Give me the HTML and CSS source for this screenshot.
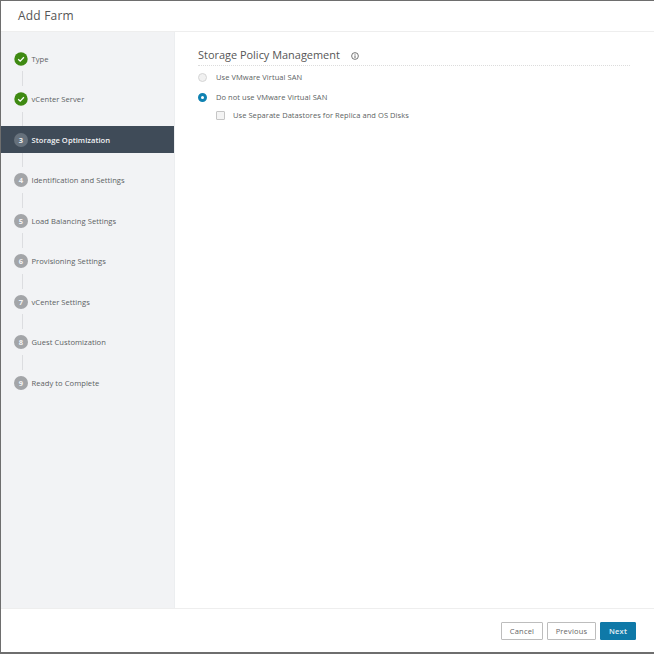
FILE: index.html
```html
<!DOCTYPE html>
<html lang="en">
<head>
<meta charset="utf-8">
<title>Add Farm</title>
<link rel="stylesheet" href="styles.css">
</head>
<body>
<div class="dialog">
  <header class="head"><h1 class="title">Add Farm</h1></header>
  <div class="main">
    <nav class="steps">
      <div class="step done"><span class="bullet"><svg viewBox="0 0 14 14" width="14" height="14"><circle cx="7" cy="7" r="6.7" fill="#3f8a12"/><path d="M4.2 7.2 6.2 9.1 9.9 5.2" fill="none" stroke="#fff" stroke-width="1.3"/></svg></span><span class="label">Type</span></div>
      <div class="step done"><span class="bullet"><svg viewBox="0 0 14 14" width="14" height="14"><circle cx="7" cy="7" r="6.7" fill="#3f8a12"/><path d="M4.2 7.2 6.2 9.1 9.9 5.2" fill="none" stroke="#fff" stroke-width="1.3"/></svg></span><span class="label">vCenter Server</span></div>
      <div class="step active"><span class="bullet num">3</span><span class="label">Storage Optimization</span></div>
      <div class="step"><span class="bullet num">4</span><span class="label">Identification and Settings</span></div>
      <div class="step"><span class="bullet num">5</span><span class="label">Load Balancing Settings</span></div>
      <div class="step"><span class="bullet num">6</span><span class="label">Provisioning Settings</span></div>
      <div class="step"><span class="bullet num">7</span><span class="label">vCenter Settings</span></div>
      <div class="step"><span class="bullet num">8</span><span class="label">Guest Customization</span></div>
      <div class="step last"><span class="bullet num">9</span><span class="label">Ready to Complete</span></div>
    </nav>
    <section class="content">
      <div class="section-head">
        <h2 class="section-title">Storage Policy Management</h2>
        <svg class="info" viewBox="0 0 9 9" width="8" height="8"><circle cx="4.5" cy="4.5" r="3.8" fill="none" stroke="#555" stroke-width="0.9"/><path d="M4.5 3.8V6.8M4.5 2.1V3" stroke="#555" stroke-width="1"/></svg>
      </div>
      <div class="option opt-first"><span class="radio off"></span><span class="opt-label">Use VMware Virtual SAN</span></div>
      <div class="option opt-second"><span class="radio on"></span><span class="opt-label">Do not use VMware Virtual SAN</span></div>
      <div class="option opt-check"><span class="check"></span><span class="opt-label">Use Separate Datastores for Replica and OS Disks</span></div>
    </section>
  </div>
  <footer class="foot">
    <button class="btn" type="button">Cancel</button>
    <button class="btn" type="button">Previous</button>
    <button class="btn primary" type="button">Next</button>
  </footer>
</div>
</body>
</html>
```
FILE: styles.css
```css
html, body { margin: 0; padding: 0; }
body { width: 654px; height: 654px; background: #fff; font-family: "Open Sans", "Liberation Sans", sans-serif; }
.dialog {
  box-sizing: border-box; width: 654px; height: 654px;
  display: flex; flex-direction: column;
  border-top: 1px solid #6e6e6e; border-left: 1px solid #6e6e6e; border-bottom: 2px solid #6e6e6e;
  background: #fff;
}
.head { height: 30px; flex: none; border-bottom: 1px solid #eee; display: flex; align-items: center; padding-left: 17px; }
.title { margin: 0; font-size: 12px; font-weight: 400; color: #555; letter-spacing: 0.2px; position: relative; top: -1px; }
.main { flex: 1; display: flex; min-height: 0; }
.steps { width: 174px; flex: none; background: #f2f3f5; border-right: 1px solid #eceef0; box-sizing: border-box; padding-top: 6.25px; }
.step { height: 40.5px; display: flex; align-items: flex-start; position: relative; }
.step > * { margin-top: 13.5px; }
.step::after { content: ""; position: absolute; left: 20.5px; top: 33px; width: 1px; height: 15px; background: #dcdde0; }
.step.last::after { display: none; }
.bullet { width: 14px; height: 14px; margin-left: 13px; flex: none; display: flex; align-items: center; justify-content: center; border-radius: 50%; position: relative; z-index: 1; }
.num { background: #a3a5a8; color: #f2f3f5; font-size: 7.5px; font-weight: 700; }
.label { margin-left: 3.5px; font-size: 7.6px; line-height: 14px; color: #5c5f63; letter-spacing: 0.04px; }
.step.active { background: #3f4b58; height: 27px; margin: 6.5px 0 7px; }
.step.active > * { margin-top: 7px; }
.step.active::after { top: 27px; height: 14px; }
.active .num { background: #66717c; color: #e8eaec; }
.active .label { color: #f2f3f5; font-weight: 600; }
.content { flex: 1; padding: 15px 24px 0 23px; box-sizing: border-box; }
.section-head { display: flex; align-items: center; gap: 11px; height: 18px; border-bottom: 1px dotted #dcdcdc; }
.section-title { margin: 0; font-size: 10.95px; font-weight: 400; color: #565656; position: relative; top: -2px; }
.info { flex: none; position: relative; top: 0; }
.option { display: flex; align-items: center; height: 12px; }
.opt-first { margin-top: 5px; }
.opt-second { margin-top: 8px; }
.opt-check { margin-top: 6px; padding-left: 18px; }
.opt-label { font-size: 7.5px; color: #5c5f63; letter-spacing: 0.06px; line-height: 12px; }
.radio { width: 9px; height: 9px; box-sizing: border-box; border-radius: 50%; flex: none; margin-right: 9px; }
.radio.off { border: 1px solid #d5d5d5; background: #f1f1f1; }
.radio.on { border: 3px solid #0f82b2; background: #fff; }
.check { width: 9px; height: 9px; box-sizing: border-box; border: 1px solid #c6c6c6; background: #f4f4f4; border-radius: 1px; flex: none; margin-right: 8px; }
.foot { height: 44px; flex: none; box-sizing: border-box; border-top: 1px solid #eee; display: flex; justify-content: flex-end; align-items: flex-start; gap: 4px; padding: 13px 18px 0 0; }
.btn { height: 18px; box-sizing: border-box; padding: 0; font-family: inherit; font-size: 7.5px; letter-spacing: 0.2px; color: #666; background: #fff; border: 1px solid #bdbdbd; border-radius: 1px; width: 42px; }
.btn + .btn { width: 49px; }
.btn.primary { width: 36px; background: #0f79a8; border-color: #0f79a8; color: #e6f1f6; font-weight: 600; }
```
